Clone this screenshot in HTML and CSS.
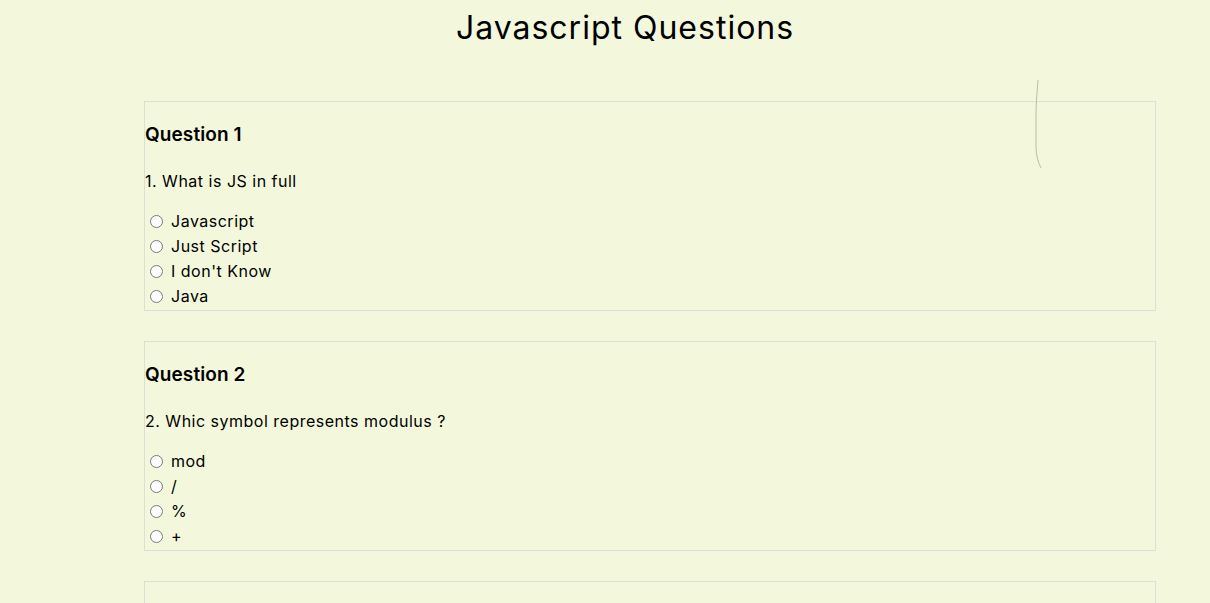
FILE: index.html
```html
<!DOCTYPE html>
<html lang="en">
<head>
<meta charset="utf-8">
<title>Javascript Questions</title>
<link rel="stylesheet" href="styles.css">
</head>
<body>
<h1 class="title">Javascript Questions</h1>
<svg class="scribble" width="12" height="92" viewBox="0 0 12 92" aria-hidden="true"><path d="M3 1 C2.5 10 1 20 1 40 L1 68 C1 76 3 83 6 89" fill="none" stroke="#b9bcaa" stroke-width="1"/></svg>
<main class="quiz">
  <section class="card">
    <h3 class="q-title">Question 1</h3>
    <p class="q-text">1. What is JS in full</p>
    <div class="options">
      <label class="opt"><input type="radio" name="q1"> Javascript</label>
      <label class="opt"><input type="radio" name="q1"> Just Script</label>
      <label class="opt"><input type="radio" name="q1"> I don't Know</label>
      <label class="opt"><input type="radio" name="q1"> Java</label>
    </div>
  </section>
  <section class="card">
    <h3 class="q-title">Question 2</h3>
    <p class="q-text">2. Whic symbol represents modulus ?</p>
    <div class="options">
      <label class="opt"><input type="radio" name="q2"> mod</label>
      <label class="opt"><input type="radio" name="q2"> /</label>
      <label class="opt"><input type="radio" name="q2"> %</label>
      <label class="opt"><input type="radio" name="q2"> +</label>
    </div>
  </section>
  <section class="card card-next"></section>
</main>
</body>
</html>
```
FILE: styles.css
```css
html, body {
  margin: 0;
  padding: 0;
}
body {
  background: #f3f8dc;
  color: #000;
  font-family: Inter, "Noto Sans", sans-serif;
  position: relative;
}
.title {
  margin: 0;
  padding: 8px 0 0 40px;
  height: 40px;
  line-height: 40px;
  text-align: center;
  font-size: 32px;
  font-weight: 400;
  letter-spacing: 1px;
}
.scribble {
  position: absolute;
  left: 1035px;
  top: 79px;
}
.quiz {
  display: flex;
  flex-direction: column;
  gap: 30px;
  width: 1012px;
  margin: 53px 0 0 144px;
}
.card {
  border: 1px solid #dddfd6;
  box-sizing: border-box;
  height: 210px;
}
.card-next {
  height: 60px;
}
.q-title {
  margin: 18px 0 0 0;
  font-size: 19px;
  line-height: 30px;
  font-weight: 600;
  letter-spacing: 0.1px;
}
.q-text {
  margin: 19px 0 0 0;
  font-size: 16px;
  line-height: 24px;
  letter-spacing: 0.5px;
}
.options {
  margin-top: 16px;
  display: flex;
  flex-direction: column;
}
.opt {
  display: block;
  font-size: 16px;
  line-height: 25px;
  height: 25px;
  letter-spacing: 0.5px;
}
.opt input {
  margin: 0 3px 0 5px;
  width: 13px;
  height: 13px;
  vertical-align: -1px;
}
```
